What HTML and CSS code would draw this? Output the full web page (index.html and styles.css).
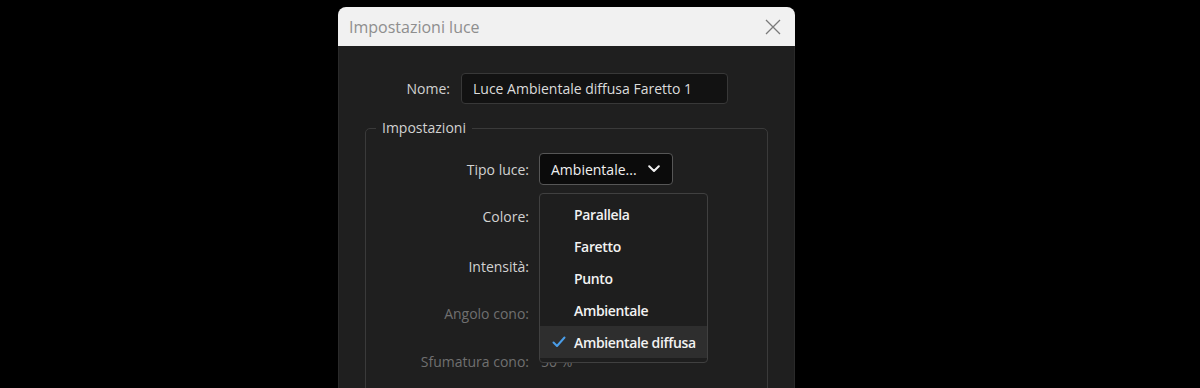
FILE: index.html
```html
<!DOCTYPE html>
<html lang="it">
<head>
<meta charset="utf-8">
<title>Impostazioni luce</title>
<link rel="stylesheet" href="styles.css">
</head>
<body>
<div class="dialog">
  <div class="titlebar">
    <span class="title">Impostazioni luce</span>
    <svg class="close" width="16" height="16" viewBox="0 0 16 16"><path d="M1 1L15 15M15 1L1 15" stroke="#7a7a7a" stroke-width="1.3" fill="none"/></svg>
  </div>
  <div class="content">
    <div class="name-row">
      <span class="label">Nome:</span>
      <div class="textfield">Luce Ambientale diffusa Faretto 1</div>
    </div>
    <div class="fieldset">
      <span class="legend">Impostazioni</span>
      <div class="row">
        <span class="label flabel">Tipo luce:</span>
        <div class="select-wrap">
          <div class="select">
            <span>Ambientale...</span>
            <svg width="12" height="8" viewBox="0 0 12 8"><path d="M1.2 1.2L6 6L10.8 1.2" stroke="#f0f0f0" stroke-width="2" fill="none" stroke-linecap="round" stroke-linejoin="round"/></svg>
          </div>
          <ul class="menu">
            <li class="item">Parallela</li>
            <li class="item">Faretto</li>
            <li class="item">Punto</li>
            <li class="item">Ambientale</li>
            <li class="item selected"><svg class="check" width="14" height="12" viewBox="0 0 14 12"><path d="M1.5 6.5L5 10L12.5 1.5" stroke="#4a9de8" stroke-width="2" fill="none" stroke-linecap="round" stroke-linejoin="round"/></svg>Ambientale diffusa</li>
          </ul>
        </div>
      </div>
      <div class="row r2"><span class="label flabel">Colore:</span></div>
      <div class="row r3"><span class="label flabel">Intensità:</span></div>
      <div class="row r4"><span class="label flabel dim">Angolo cono:</span></div>
      <div class="row r5"><span class="label flabel dim">Sfumatura cono:</span><span class="value dim">50 %</span></div>
    </div>
  </div>
</div>
</body>
</html>
```
FILE: styles.css
```css
* { box-sizing: border-box; }
html, body { margin: 0; padding: 0; background: #000; }
body { font-family: "Open Sans", "Noto Sans", sans-serif; height: 388px; overflow: hidden; }
.dialog { margin-left: 338px; margin-top: 7px; width: 457px; height: 381px; display: flex; flex-direction: column; overflow: hidden; }
.titlebar { flex-shrink: 0; height: 39px; background: #f1f1f1; border-radius: 8px 8px 0 0; display: flex; align-items: center; justify-content: space-between; padding: 0 14px 0 11px; }
.title { color: #8e8e8e; font-size: 16px; }
.close { display: block; }
.content { flex: 1; min-height: 0; background: #1f1f1f; border-left: 1px solid #2a2a2a; border-right: 1px solid #2a2a2a; padding: 27px 0 0 26px; }
.label { color: #d2d2d2; font-size: 14px; }
.name-row { display: flex; align-items: center; }
.name-row .label { width: 85px; text-align: right; }
.textfield { margin-left: 11px; width: 267px; height: 31px; background: #121212; border: 1px solid #383838; border-radius: 4px; color: #dcdcdc; font-size: 14px; padding-left: 11px; display: flex; align-items: center; }
.fieldset { position: relative; margin-top: 24px; width: 403px; height: 290px; border: 1px solid #3a3a3a; border-radius: 5px; padding-top: 24px; }
.legend { position: absolute; top: -11px; left: 10px; background: #1f1f1f; color: #d2d2d2; font-size: 14px; padding: 0 6px; line-height: 20px; }
.row { display: flex; align-items: center; height: 32px; }
.flabel { width: 163px; text-align: right; }
.dim { color: #707070; }
.r2 { margin-top: 15px; }
.r3 { margin-top: 18px; }
.r4 { margin-top: 15px; }
.r5 { margin-top: 16px; }
.value { margin-left: 12px; font-size: 14px; }
.select-wrap { position: relative; margin-left: 10px; }
.select { width: 134px; height: 32px; background: #0b0b0b; border: 1px solid #565656; border-radius: 4px; display: flex; align-items: center; justify-content: space-between; padding: 0 12px 0 11px; color: #f0f0f0; font-size: 14px; }
.select svg { display: block; }
.menu { position: absolute; z-index: 2; left: 0; top: 40px; width: 169px; margin: 0; padding: 4px 0 4px; list-style: none; background: #1e1e1e; border: 1px solid #404040; border-radius: 4px; }
.item { height: 32px; display: flex; align-items: center; padding-left: 34px; color: #f2f2f2; font-size: 14px; font-weight: 600; letter-spacing: -0.35px; position: relative; }
.item.selected { background: #2e2e2e; }
.check { position: absolute; left: 12px; top: 10px; }
```
